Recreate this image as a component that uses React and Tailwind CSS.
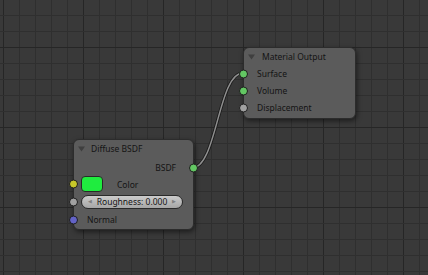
const font = { fontFamily: '"Noto Sans", "Open Sans", sans-serif' }

const Grid = () => {
  const xs = Array.from({ length: 27 }, (_, i) => 3 + 16 * i)
  const ys = Array.from({ length: 17 }, (_, i) => 15 + 16 * i)
  return (
    <svg className="absolute inset-0" width="428" height="275">
      {xs.map(x => (
        <line
          key={`x${x}`}
          x1={x + 0.5}
          x2={x + 0.5}
          y1="0"
          y2="275"
          stroke={(x - 3) % 80 === 0 ? '#262626' : '#2f2f2f'}
          strokeWidth="1"
        />
      ))}
      {ys.map(y => (
        <line
          key={`y${y}`}
          y1={y + 0.5}
          y2={y + 0.5}
          x1="0"
          x2="428"
          stroke={(y - 47) % 80 === 0 ? '#262626' : '#2f2f2f'}
          strokeWidth="1"
        />
      ))}
    </svg>
  )
}

const Socket = ({ color, side = 'left' }) => (
  <span
    className={`absolute top-1/2 -translate-y-1/2 w-[9px] h-[9px] rounded-full border border-[#1e1e1e] ${
      side === 'left' ? 'left-[-5px]' : 'right-[-5px]'
    }`}
    style={{ backgroundColor: color }}
  />
)

const Triangle = () => (
  <svg width="7" height="6" viewBox="0 0 7 6" className="shrink-0">
    <polygon points="0,0.5 7,0.5 3.5,5.5" fill="#3f3f3f" />
  </svg>
)

const Header = ({ title, gap }) => (
  <div className={`flex items-center h-[17px] pl-[4px] ${gap}`}>
    <Triangle />
    <span className="text-[8.5px] text-[#141414] leading-none pt-[1px]">{title}</span>
  </div>
)

const Label = ({ children, className = '' }) => (
  <span className={`text-[8.5px] text-[#141414] leading-none pt-[2px] ${className}`}>{children}</span>
)

const Row = ({ children, className = '' }) => (
  <div className={`relative flex items-center ${className}`}>{children}</div>
)

const nodeClass =
  'absolute box-border bg-[#5b5b5b] border border-[#2c2c2c] rounded-[6px] shadow-[1px_2px_5px_rgba(0,0,0,0.5)]'

export default function App() {
  return (
    <div className="relative w-[428px] h-[275px] overflow-hidden bg-[#393939]" style={font}>
      <Grid />

      <svg className="absolute inset-0" width="428" height="275">
        <path
          d="M192 168 C217 168, 218 73, 243 73"
          fill="none"
          stroke="#1c1c1c"
          strokeWidth="3.2"
        />
        <path
          d="M192 168 C217 168, 218 73, 243 73"
          fill="none"
          stroke="#8f8f8f"
          strokeWidth="1.4"
        />
      </svg>

      {/* Material Output */}
      <div className={`${nodeClass} left-[243px] top-[47px] w-[113px] h-[72px]`}>
        <Header title="Material Output" gap="gap-[7px]" />
        <Row className="h-[17px] pl-[13px]">
          <Socket color="#63c763" />
          <Label>Surface</Label>
        </Row>
        <Row className="h-[17px] pl-[13px]">
          <Socket color="#63c763" />
          <Label>Volume</Label>
        </Row>
        <Row className="h-[17px] pl-[13px]">
          <Socket color="#a1a1a1" />
          <Label>Displacement</Label>
        </Row>
      </div>

      {/* Diffuse BSDF */}
      <div className={`${nodeClass} left-[73px] top-[139px] w-[121px] h-[91px]`}>
        <Header title="Diffuse BSDF" gap="gap-[6px]" />
        <Row className="h-[17px] mt-[2px] justify-end pr-[17px]">
          <Socket color="#63c763" side="right" />
          <Label>BSDF</Label>
        </Row>
        <Row className="h-[16px] pl-[7px]">
          <Socket color="#c7c729" />
          <span className="w-[22px] h-[16px] rounded-[4px] bg-[#1fec3f] border border-[#2a2a2a]" />
          <Label className="ml-[14px]">Color</Label>
        </Row>
        <Row className="h-[14px] mt-[3px] pl-[7px]">
          <Socket color="#a1a1a1" />
          <div className="relative flex items-center justify-center w-[102px] h-[14px] rounded-full border border-[#2a2a2a] bg-gradient-to-b from-[#cbcbcb] to-[#a6a6a6]">
            <span className="absolute left-[6px] text-[5px] text-[#808080]">◀</span>
            <span className="text-[8.5px] text-[#141414] leading-none pt-[1px]">Roughness: 0.000</span>
            <span className="absolute right-[6px] text-[5px] text-[#808080]">▶</span>
          </div>
        </Row>
        <Row className="h-[17px] mt-[2px] pl-[13px]">
          <Socket color="#6363c7" />
          <Label>Normal</Label>
        </Row>
      </div>
    </div>
  )
}
